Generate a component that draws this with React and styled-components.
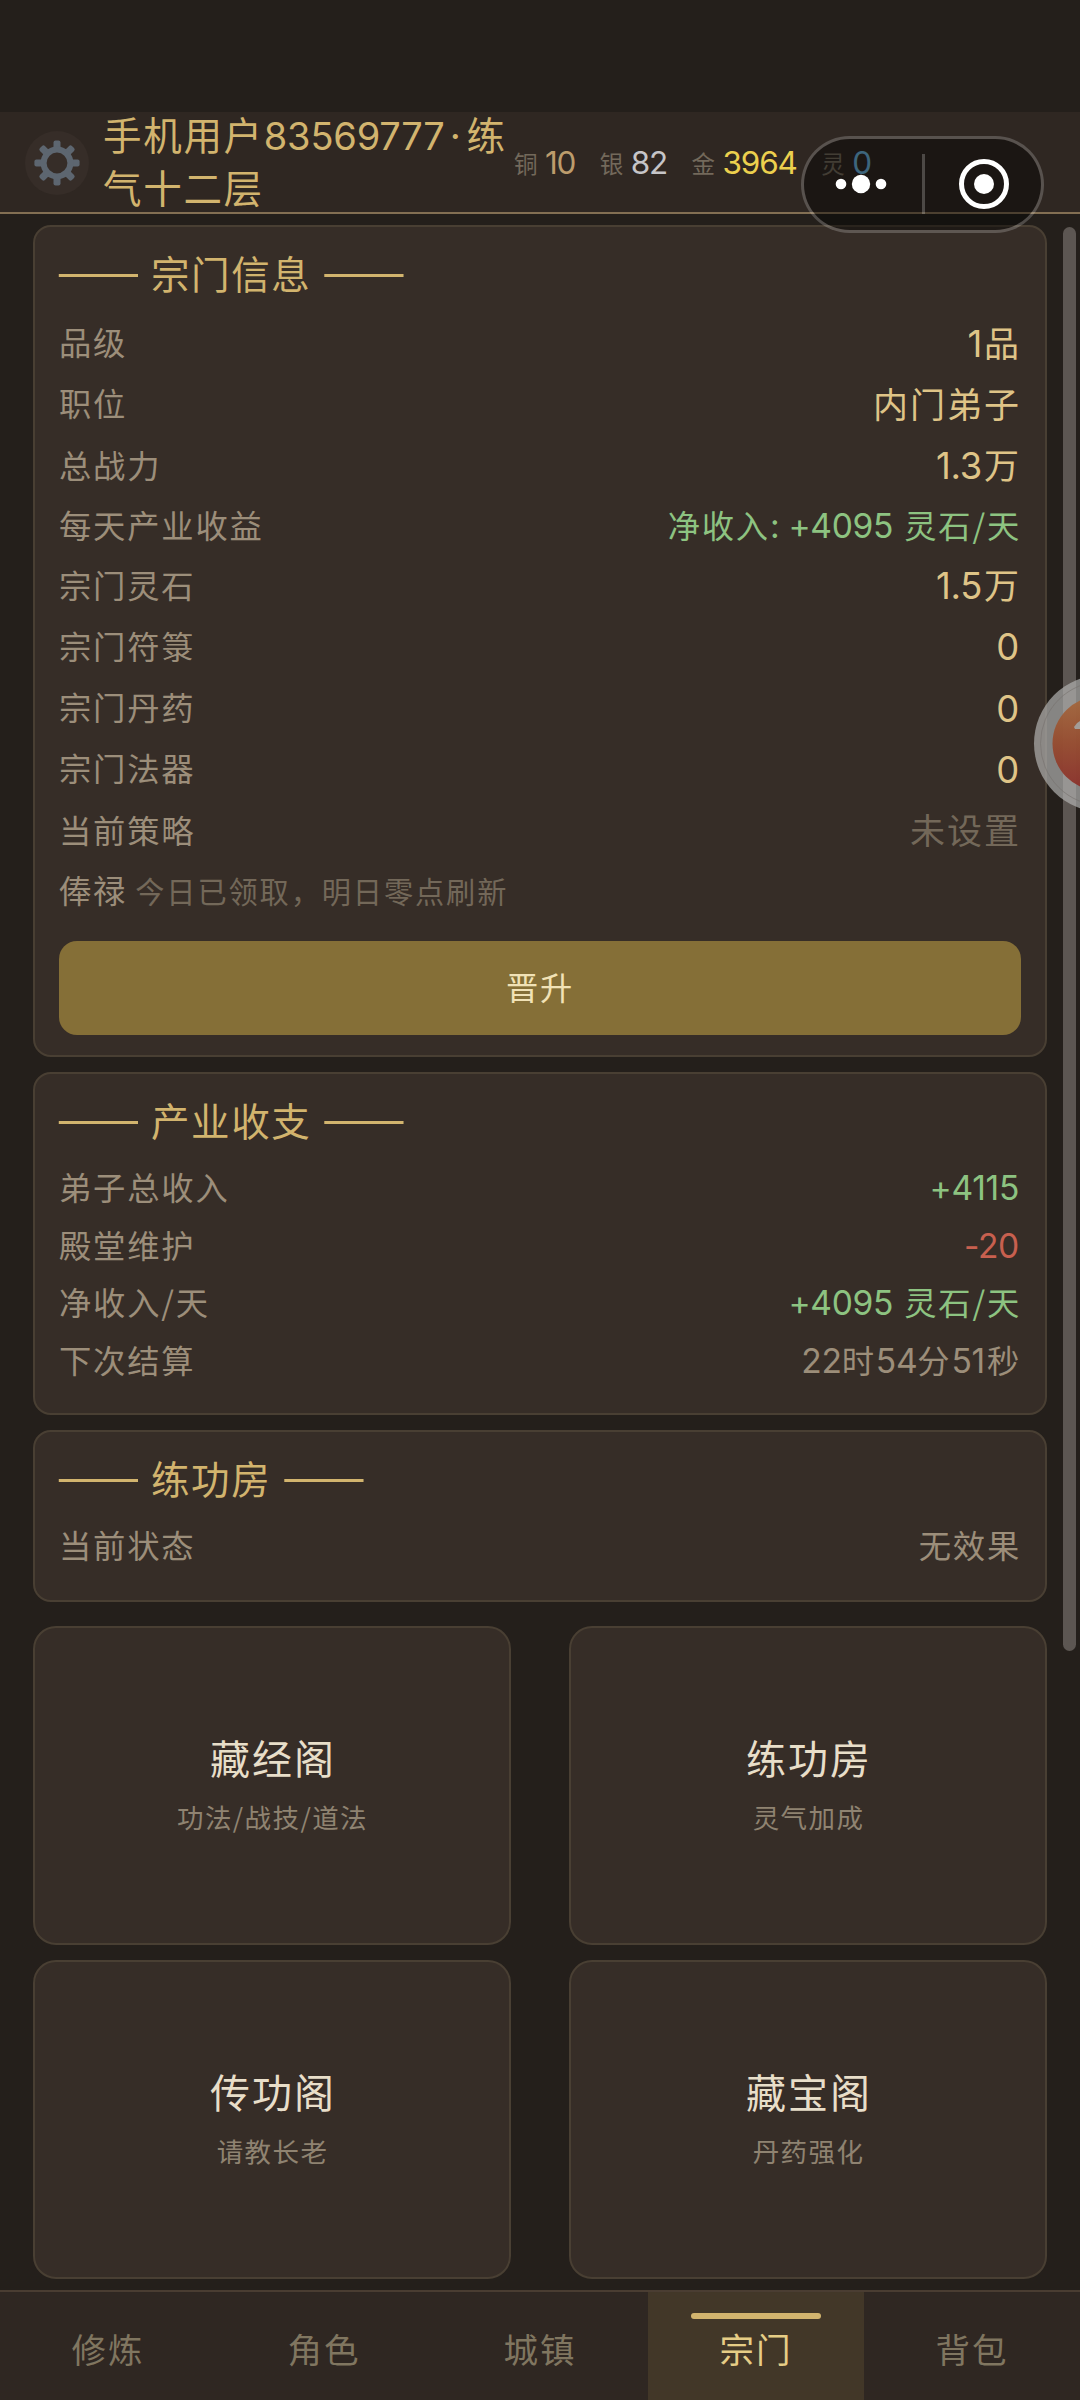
import styled, { createGlobalStyle, css } from "styled-components";

const GlobalStyle = createGlobalStyle`
  * {
    box-sizing: border-box;
  }
  body {
    margin: 0;
    background: #241f1c;
    font-family: "Noto Sans CJK SC", sans-serif;
  }
`;

const Page = styled.div`
  position: relative;
  width: 1080px;
  height: 2400px;
  display: flex;
  flex-direction: column;
  background: #241f1b;
  overflow: hidden;
`;

const StatusBar = styled.div`
  height: 112px;
  flex-shrink: 0;
`;

const Header = styled.header`
  height: 102px;
  flex-shrink: 0;
  display: flex;
  align-items: center;
  padding: 2px 0 0 25px;
  background: #2f2722;
  border-bottom: 2px solid #836f53;
`;

const SettingsButton = styled.button`
  width: 64px;
  height: 64px;
  flex-shrink: 0;
  padding: 0;
  border: none;
  border-radius: 50%;
  background: #362d28;
  display: flex;
  align-items: center;
  justify-content: center;
`;

const PlayerName = styled.div`
  width: 411px;
  flex-shrink: 0;
  margin: -6px 0 0 14px;
  color: #d2b46e;
  font-size: 38.5px;
  line-height: 53.5px;
  letter-spacing: 1.7px;
`;

const NameDigits = styled.span`
  font-family: Inter, sans-serif;
  font-size: 38px;
  line-height: 1;
  letter-spacing: -0.2px;
`;

const NameDot = styled.span`
  font-family: Inter, sans-serif;
  line-height: 1;
  margin: 0 4px 0 5px;
`;

const Wallet = styled.div`
  display: flex;
  gap: 24.5px;
`;

const Coin = styled.div`
  display: flex;
  align-items: center;
  gap: 7.5px;
  color: ${({ color }) => color};
  font-family: Inter, sans-serif;
  font-size: 31.5px;
  line-height: 40px;
  letter-spacing: -1.2px;
`;

const CoinLabel = styled.span`
  color: #73695b;
  font-family: "Noto Sans CJK SC", sans-serif;
  font-size: 23.5px;
  letter-spacing: 0;
`;

const Content = styled.main`
  flex: 1;
  min-height: 0;
  padding: 11px 33px 0;
`;

const Card = styled.section`
  margin-bottom: 15px;
  padding: 22px 24px ${({ $bottom }) => $bottom || 24.5}px;
  border: 2px solid #493f33;
  border-radius: 18px;
  background: #362d27;
`;

const CardTitle = styled.h2`
  display: flex;
  align-items: center;
  gap: 12px;
  height: 50px;
  margin: 0 0 12px -1px;
  padding-bottom: 4px;
  color: #d2b46e;
  font-size: 38.5px;
  font-weight: 400;
  letter-spacing: 1.6px;
`;

const Dash = styled.span`
  width: 81px;
  margin-top: -8px;
  display: flex;
  justify-content: center;
  font-size: 50px;
  line-height: 50px;
  letter-spacing: 0;
  white-space: nowrap;
`;

const Row = styled.div`
  display: flex;
  align-items: center;
  justify-content: space-between;
  height: ${({ $height }) => $height || 57.6}px;
  padding-bottom: 1px;
`;

const Label = styled.span`
  color: #9c8e7a;
  font-size: 32.3px;
  letter-spacing: 1.8px;
`;

const tones = {
  gold: "#dfc487",
  green: "#8dc381",
  red: "#c8604f",
  muted: "#9c8e7a",
  faint: "#736859",
};

const Num = styled.span`
  font-family: Inter, sans-serif;
  font-size: 1.04em;
  line-height: 1;
  letter-spacing: -0.3px;
`;

const Value = styled.span`
  color: ${({ $tone }) => tones[$tone]};
  font-size: 32.3px;
  letter-spacing: 1.8px;
  ${({ $large }) =>
    $large &&
    css`
      font-size: 35px;
      letter-spacing: 2px;
    `}

  ${Num}:last-child {
    margin-right: 2px;
  }
`;

const Hint = styled.span`
  margin-left: 8px;
  color: #736859;
  font-size: 29.2px;
  letter-spacing: 1.9px;
`;

const PromoteButton = styled.button`
  display: block;
  width: 100%;
  height: 94px;
  margin-top: 21.5px;
  padding: 0 0 4px;
  border: none;
  border-radius: 18px;
  background: #856f37;
  color: #f1e2b6;
  font-family: inherit;
  font-size: 32.3px;
  letter-spacing: 1.8px;
`;

const Halls = styled.div`
  display: grid;
  grid-template-columns: 478px 478px;
  justify-content: space-between;
  row-gap: 15px;
  margin-top: 24px;
`;

const Hall = styled.div`
  height: 319px;
  display: flex;
  flex-direction: column;
  align-items: center;
  justify-content: center;
  gap: 3px;
  padding-bottom: 2px;
  border: 2px solid #493f33;
  border-radius: 23px;
  background: #362d27;
`;

const HallName = styled.div`
  color: #e8dec9;
  font-size: 40px;
  line-height: 62px;
  letter-spacing: 2px;
  margin-left: 2px;
`;

const HallHint = styled.div`
  color: #8f8371;
  font-size: 26.5px;
  line-height: 52px;
  letter-spacing: 1.4px;
  margin-left: 1px;
`;

const TabBar = styled.nav`
  height: 110px;
  flex-shrink: 0;
  display: grid;
  grid-template-columns: repeat(5, 1fr);
  background: #2f2722;
`;

const Tab = styled.div`
  position: relative;
  display: flex;
  align-items: center;
  justify-content: center;
  padding-top: 4px;
  border-top: 2px solid #4a3d32;
  color: #807660;
  font-size: 34.5px;
  letter-spacing: 1.9px;
  ${({ $active }) =>
    $active &&
    css`
      color: #e6cd86;
      background: #423728;
      &::before {
        content: "";
        position: absolute;
        top: 21px;
        left: 20%;
        width: 60%;
        height: 6px;
        border-radius: 3px;
        background: #d2b46e;
      }
    `}
`;

const Capsule = styled.div`
  position: absolute;
  top: 135.5px;
  left: 801px;
  width: 243px;
  height: 97px;
  display: flex;
  align-items: center;
  border: 3px solid rgba(255, 255, 255, 0.2);
  border-radius: 49px;
  background: rgba(0, 0, 0, 0.42);
  background-clip: padding-box;
`;

const CapsuleHalf = styled.div`
  flex: 1;
  display: flex;
  align-items: center;
  justify-content: center;
  padding: ${({ $pad }) => $pad};
`;

const CapsuleLine = styled.div`
  width: 3px;
  height: 60px;
  background: rgba(255, 255, 255, 0.22);
`;

const ScrollThumb = styled.div`
  position: absolute;
  top: 227px;
  right: 4px;
  width: 13px;
  height: 1424px;
  border-radius: 7px;
  background: #5c5652;
`;

const FloatingBall = styled.div`
  position: absolute;
  top: 675px;
  left: 1034px;
  width: 137px;
  height: 137px;
  border-radius: 50%;
  background: rgba(176, 176, 175, 0.7);
  overflow: hidden;

  svg {
    display: block;
  }
`;

const Mixed = ({ text }) =>
  text
    .split(/([\d.:+-]+)/)
    .map((part, i) => (i % 2 ? <Num key={i}>{part}</Num> : part));

const Gear = () => (
  <svg width="46" height="46" viewBox="-23 -23 46 46">
    <g fill="#5d6670">
      {[0, 45, 90, 135, 180, 225, 270, 315].map((angle) => (
        <rect
          key={angle}
          x="-3.5"
          y="-22.6"
          width="7"
          height="9"
          rx="2"
          transform={`rotate(${angle})`}
        />
      ))}
    </g>
    <circle r="13.4" fill="none" stroke="#5d6670" strokeWidth="6" />
  </svg>
);

const Title = ({ children }) => (
  <CardTitle>
    <Dash>——</Dash>
    <span>{children}</span>
    <Dash>——</Dash>
  </CardTitle>
);

const coins = [
  { label: "铜", amount: "10", color: "#bd9c6c" },
  { label: "银", amount: "82", color: "#c6c5c8" },
  { label: "金", amount: "3964", color: "#ecd04e" },
  { label: "灵", amount: "0", color: "#6aaed6" },
];

const sectInfo = [
  { label: "品级", value: "1品", tone: "gold", large: true },
  { label: "职位", value: "内门弟子", tone: "gold", large: true },
  { label: "总战力", value: "1.3万", tone: "gold", large: true },
  { label: "每天产业收益", value: "净收入: +4095 灵石/天", tone: "green", height: 58.5 },
  { label: "宗门灵石", value: "1.5万", tone: "gold", large: true },
  { label: "宗门符箓", value: "0", tone: "gold", large: true },
  { label: "宗门丹药", value: "0", tone: "gold", large: true },
  { label: "宗门法器", value: "0", tone: "gold", large: true },
  { label: "当前策略", value: "未设置", tone: "faint", large: true },
];

const income = [
  { label: "弟子总收入", value: "+4115", tone: "green" },
  { label: "殿堂维护", value: "-20", tone: "red" },
  { label: "净收入/天", value: "+4095 灵石/天", tone: "green" },
  { label: "下次结算", value: "22时54分51秒", tone: "muted" },
];

const halls = [
  { name: "藏经阁", hint: "功法/战技/道法" },
  { name: "练功房", hint: "灵气加成" },
  { name: "传功阁", hint: "请教长老" },
  { name: "藏宝阁", hint: "丹药强化" },
];

const tabs = ["修炼", "角色", "城镇", "宗门", "背包"];

const App = () => {
  return (
    <Page>
      <GlobalStyle />
      <StatusBar />
      <Header>
        <SettingsButton aria-label="设置">
          <Gear />
        </SettingsButton>
        <PlayerName>
          手机用户<NameDigits>83569777</NameDigits>
          <NameDot>·</NameDot>练气十二层
        </PlayerName>
        <Wallet>
          {coins.map(({ label, amount, color }) => (
            <Coin key={label} color={color}>
              <CoinLabel>{label}</CoinLabel>
              {amount}
            </Coin>
          ))}
        </Wallet>
      </Header>

      <Content>
        <Card $bottom={20}>
          <Title>宗门信息</Title>
          {sectInfo.map(({ label, value, tone, large, height }) => (
            <Row key={label} $height={height || 61.3}>
              <Label>{label}</Label>
              <Value $tone={tone} $large={large}>
                <Mixed text={value} />
              </Value>
            </Row>
          ))}
          <Row $height={59.3}>
            <div>
              <Label>俸禄</Label>
              <Hint>今日已领取，明日零点刷新</Hint>
            </div>
          </Row>
          <PromoteButton>晋升</PromoteButton>
        </Card>

        <Card>
          <Title>产业收支</Title>
          {income.map(({ label, value, tone }) => (
            <Row key={label}>
              <Label>{label}</Label>
              <Value $tone={tone}>
                <Mixed text={value} />
              </Value>
            </Row>
          ))}
        </Card>

        <Card $bottom={27}>
          <Title>练功房</Title>
          <Row>
            <Label>当前状态</Label>
            <Value $tone="muted">无效果</Value>
          </Row>
        </Card>

        <Halls>
          {halls.map(({ name, hint }) => (
            <Hall key={name}>
              <HallName>{name}</HallName>
              <HallHint>{hint}</HallHint>
            </Hall>
          ))}
        </Halls>
      </Content>

      <TabBar>
        {tabs.map((tab) => (
          <Tab key={tab} $active={tab === "宗门"}>
            {tab}
          </Tab>
        ))}
      </TabBar>

      <ScrollThumb />

      <FloatingBall>
        <svg width="137" height="137" viewBox="0 0 137 137">
          <defs>
            <linearGradient id="ball" x1="0" y1="0" x2="0" y2="1">
              <stop offset="0" stopColor="#a5683c" />
              <stop offset="0.5" stopColor="#96492c" />
              <stop offset="1" stopColor="#8a2c28" />
            </linearGradient>
          </defs>
          <circle cx="68.5" cy="68.5" r="62" fill="none" stroke="#77726e" strokeOpacity="0.6" />
          <circle cx="66" cy="68.5" r="47.5" fill="url(#ball)" fillOpacity="0.92" />
          <path d="M40 52q5 -9 14 -6v8h-13z" fill="#a39d98" />
        </svg>
      </FloatingBall>

      <Capsule>
        <CapsuleHalf $pad="0 3px 1px 0">
          <svg width="52" height="20" viewBox="0 0 52 20" fill="#fff">
            <circle cx="6" cy="10" r="5.3" />
            <circle cx="26" cy="10" r="9.2" />
            <circle cx="46" cy="10" r="5.3" />
          </svg>
        </CapsuleHalf>
        <CapsuleLine />
        <CapsuleHalf $pad="0 0 1px 2px">
          <svg width="52" height="52" viewBox="0 0 52 52">
            <circle cx="26" cy="26" r="22.5" fill="none" stroke="#fff" strokeWidth="5" />
            <circle cx="26" cy="26" r="10" fill="#fff" />
          </svg>
        </CapsuleHalf>
      </Capsule>
    </Page>
  );
};

export default App;
